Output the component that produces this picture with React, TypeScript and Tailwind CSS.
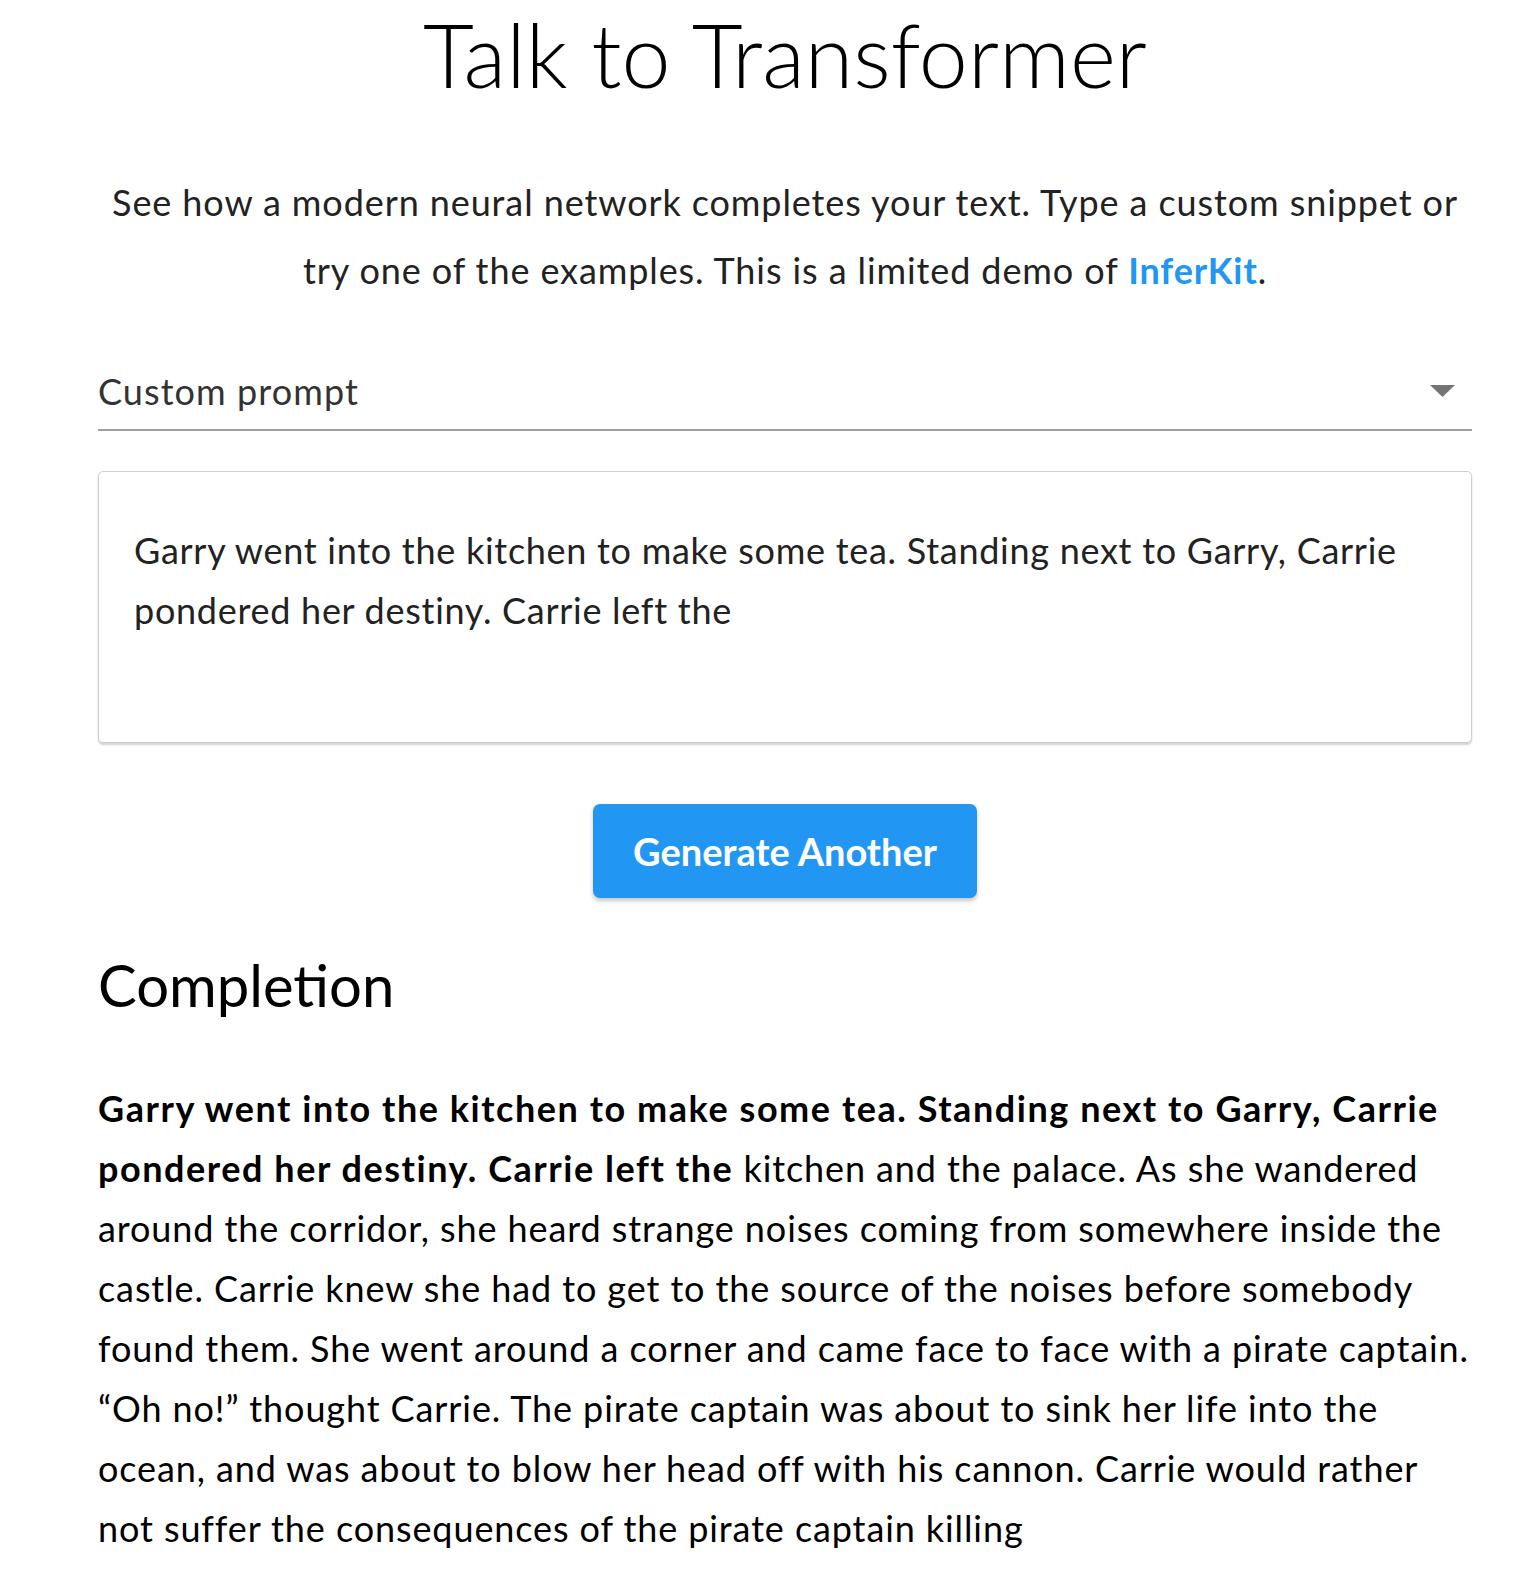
import React from 'react';

const body = "font-['Lato','Liberation_Sans',sans-serif]";

export default function App() {
    return (
        <div className="min-h-screen bg-white text-black">
            <div className={`ml-[98px] w-[1374px] flex flex-col ${body}`}>
                <h1 className="mt-[10px] text-center text-[88px] leading-[1] font-light">
                    Talk to Transformer
                </h1>

                <p className="mt-[70px] text-center text-[36px] leading-[68px] tracking-[0.025em] text-[#222]">
                    See how a modern neural network completes your text. Type a custom snippet or try one of the
                    examples. This is a limited demo of{' '}
                    <a href="#" className="font-bold text-[#2196f3]">InferKit</a>.
                </p>

                {/* select */}
                <div className="mt-[63px] flex items-center justify-between border-b-2 border-[#a0a0a0] pb-[14px]">
                    <span className="text-[36px] leading-[48px] tracking-[0.03em] text-[#333]">Custom prompt</span>
                    <svg width="25" height="12" viewBox="0 0 25 12" className="mr-[17px]">
                        <path d="M0 0 L25 0 L12.5 12 Z" fill="#757575" />
                    </svg>
                </div>

                {/* prompt box */}
                <div className="mt-[40px] h-[272px] rounded-[5px] border border-[#cfcfcf] bg-white pl-[35px] pr-[40px] pt-[48px] shadow-[0_2px_2px_rgba(0,0,0,0.18)]">
                    <p className="text-[36px] leading-[60px] tracking-[0.02em] text-[#222]">
                        Garry went into the kitchen to make some tea. Standing next to Garry, Carrie pondered her
                        destiny. Carrie left the
                    </p>
                </div>

                <button className="mx-auto mt-[61px] h-[94px] w-[384px] rounded-[7px] bg-[#2196f3] text-[38px] font-bold text-white shadow-[0_3px_4px_rgba(0,0,0,0.22)]">
                    Generate Another
                </button>

                <h2 className="mt-[51px] text-[58px] leading-[72px]">Completion</h2>

                <p className="mt-[57px] mr-[-10px] text-[36px] leading-[60px] tracking-[0.025em]">
                    <strong className="tracking-[0.043em]">
                        Garry went into the kitchen to make some tea. Standing next to Garry, Carrie pondered her
                        destiny. Carrie left the
                    </strong>{' '}
                    kitchen and the palace. As she wandered around the corridor, she heard strange noises coming from
                    somewhere inside the castle. Carrie knew she had to get to the source of the noises before
                    somebody found them. She went around a corner and came face to face with a pirate captain. “Oh
                    no!” thought Carrie. The pirate captain was about to sink her life into the ocean, and was about
                    to blow her head off with his cannon. Carrie would rather not suffer the consequences of the
                    pirate captain killing
                </p>
            </div>
        </div>
    );
}
